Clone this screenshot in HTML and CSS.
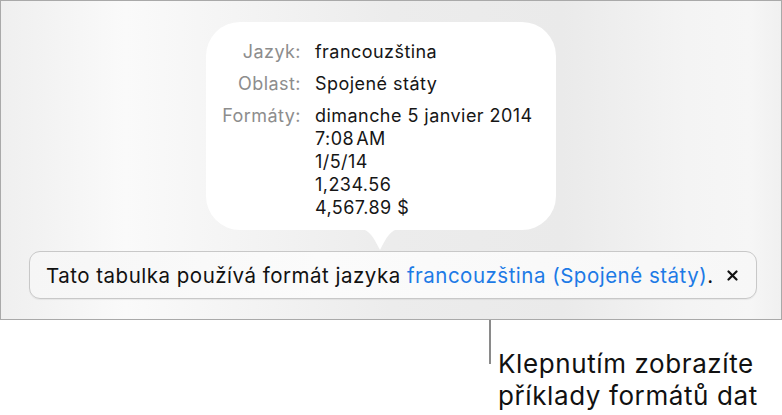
FILE: index.html
```html
<!DOCTYPE html>
<html lang="cs">
<head>
<meta charset="utf-8">
<link rel="stylesheet" href="styles.css">
</head>
<body>
<div class="frame">
  <div class="popover">
    <div class="grid">
      <div class="label">Jazyk:</div>
      <div class="value">francouzština</div>
      <div class="label">Oblast:</div>
      <div class="value">Spojené státy</div>
      <div class="label">Formáty:</div>
      <div class="value formats">
        <div>dimanche 5 janvier 2014</div>
        <div>7:08&#8202;AM</div>
        <div>1/5/14</div>
        <div>1,234.56</div>
        <div>4,567.89 $</div>
      </div>
    </div>
    <svg class="tail" width="40" height="22" viewBox="0 0 40 22"><path d="M0 0 C9 0 14 9 20 21 C26 9 31 0 40 0 Z" fill="#fff"/></svg>
  </div>
  <div class="banner">
    <span class="msg">Tato tabulka používá formát jazyka <span class="link">francouzština (Spojené státy)</span>.</span>
    <svg class="close" width="11" height="11" viewBox="0 0 11 11"><path d="M1.5 1.5 L9.5 9.5 M9.5 1.5 L1.5 9.5" stroke="#111" stroke-width="2.2" stroke-linecap="round"/></svg>
  </div>
</div>
<div class="callout">
  <div class="line"></div>
  <div class="note">Klepnutím zobrazíte<br>příklady formátů dat</div>
</div>
</body>
</html>
```
FILE: styles.css
```css
html, body {
  margin: 0;
  padding: 0;
  background: #fff;
}
body {
  width: 782px;
  height: 415px;
  overflow: hidden;
  font-family: Inter, "Liberation Sans", sans-serif;
  color: #111;
}
.frame {
  box-sizing: border-box;
  width: 782px;
  height: 320px;
  border: 1px solid #a9a9a9;
  padding-top: 21px;
  background: linear-gradient(90deg, #efefef 0%, #fafafa 16%, #f4f4f4 30%, #ececec 50%, #eaeaea 72%, #f4f4f4 88%, #f6f6f6 96%, #f0f0f0 100%);
}
.popover {
  position: relative;
  box-sizing: border-box;
  margin-left: 205px;
  width: 350px;
  height: 208px;
  background: #fff;
  border-radius: 34px;
  padding-top: 18px;
}
.grid {
  display: grid;
  grid-template-columns: 95px auto;
  column-gap: 14px;
  row-gap: 9px;
  font-size: 18px;
  letter-spacing: 0.45px;
  line-height: 23px;
}
.label {
  text-align: right;
  color: #8d8d8d;
}
.value {
  color: #161616;
}
.tail {
  position: absolute;
  left: 154px;
  bottom: -21px;
  display: block;
}
.banner {
  box-sizing: border-box;
  margin: 21px 0 0 28px;
  width: 728px;
  height: 48px;
  border: 1px solid #c8c8c8;
  border-radius: 11px;
  background: linear-gradient(90deg, #f6f6f6 0%, #fbfbfb 40%, #f7f7f7 100%);
  box-shadow: 0 1px 1px rgba(0,0,0,0.06);
  display: flex;
  align-items: center;
  padding-left: 16px;
  gap: 13px;
  font-size: 20.5px;
  letter-spacing: 0.5px;
}
.link {
  color: #1c7ae6;
}
.close {
  display: block;
}
.callout {
  display: flex;
  margin-left: 489px;
  gap: 7px;
}
.line {
  width: 2px;
  height: 44px;
  background: #8a8a8a;
}
.note {
  padding-top: 28px;
  font-size: 26px;
  letter-spacing: 0.6px;
  line-height: 32px;
  color: #111;
}
```
